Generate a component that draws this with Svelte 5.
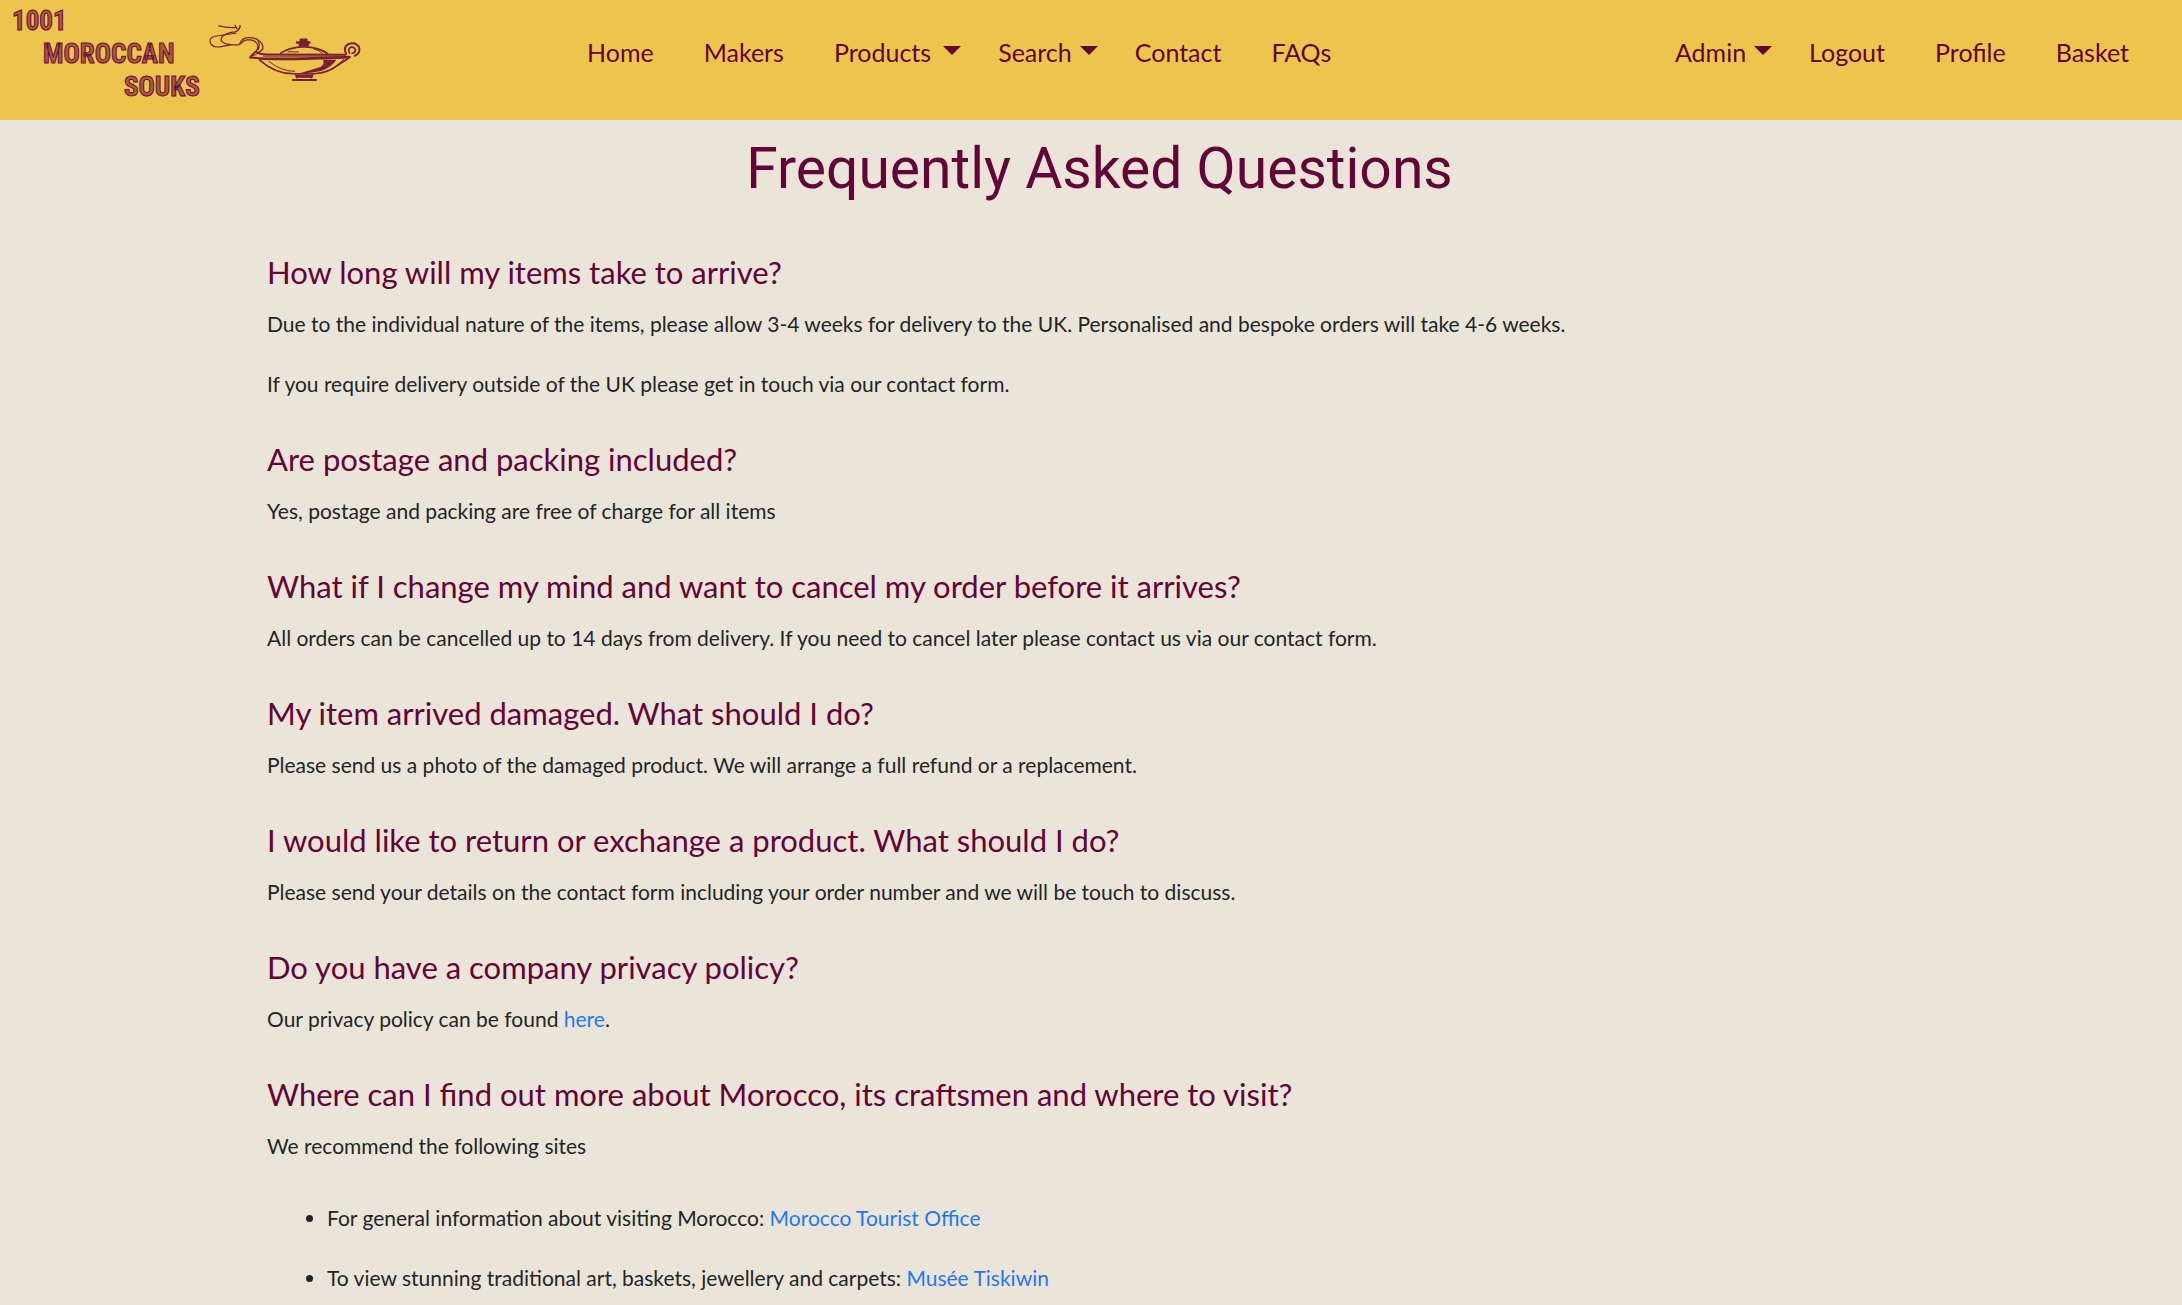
<script>
  const mainNav = [
    { label: 'Home' },
    { label: 'Makers' },
    { label: 'Products', menu: true, wide: true },
    { label: 'Search', menu: true },
    { label: 'Contact' },
    { label: 'FAQs' }
  ];
  const userNav = [
    { label: 'Admin', menu: true },
    { label: 'Logout' },
    { label: 'Profile' },
    { label: 'Basket' }
  ];
  const faqs = [
    {
      q: 'How long will my items take to arrive?',
      a: [
        'Due to the individual nature of the items, please allow 3-4 weeks for delivery to the UK. Personalised and bespoke orders will take 4-6 weeks.',
        'If you require delivery outside of the UK please get in touch via our contact form.'
      ]
    },
    {
      q: 'Are postage and packing included?',
      a: ['Yes, postage and packing are free of charge for all items']
    },
    {
      q: 'What if I change my mind and want to cancel my order before it arrives?',
      a: ['All orders can be cancelled up to 14 days from delivery. If you need to cancel later please contact us via our contact form.']
    },
    {
      q: 'My item arrived damaged. What should I do?',
      a: ['Please send us a photo of the damaged product. We will arrange a full refund or a replacement.']
    },
    {
      q: 'I would like to return or exchange a product. What should I do?',
      a: ['Please send your details on the contact form including your order number and we will be touch to discuss.']
    }
  ];
  const sites = [
    { text: 'For general information about visiting Morocco:', link: 'Morocco Tourist Office' },
    { text: 'To view stunning traditional art, baskets, jewellery and carpets:', link: 'Musée Tiskiwin' }
  ];
</script>

{#snippet items(list)}
  <ul class="nav">
    {#each list as item}
      <li>
        {#if item.menu}
          <button type="button" class="link toggle" class:wide={item.wide} aria-haspopup="true">
            {item.label}<span class="caret"></span>
          </button>
        {:else}
          <a class="link plain" href="#top">{item.label}</a>
        {/if}
      </li>
    {/each}
  </ul>
{/snippet}

<header class="bar" id="top">
  <a class="brand" href="#top">
    <span class="name">
      <span>1001</span>
      <span class="second">MOROCCAN</span>
      <span class="third">SOUKS</span>
    </span>
    <svg class="lamp" viewBox="20 30 470 190" aria-hidden="true">
      <g fill="none" stroke="currentColor" stroke-linecap="round" stroke-linejoin="round">
        <!-- smoke -->
        <path stroke-width="4" d="M54 48 Q75 54 103 53 M103 46 L108 56 M118 47 Q116 62 103 66 Q78 68 64 80 Q54 96 76 102 Q98 107 116 104 Q122 84 142 83 Q164 82 174 92 Q190 104 186 118 Q180 126 170 130" />
        <path stroke-width="3.5" d="M106 70 Q70 74 42 79 Q24 84 28 98 Q34 114 56 111 Q72 108 90 105 M112 60 L118 52 M120 102 Q130 88 144 90 Q160 88 168 100 Q176 110 166 124 M172 94 Q180 106 172 120" />
        <!-- spout and rim -->
        <path stroke-width="6" d="M163 127 L148 143 L184 146 M166 126 Q176 134 200 134 L436 135" />
        <path stroke-width="8" d="M184 147 Q300 149 448 142" />
        <path stroke-width="3" d="M188 139 H430 M158 138 L176 128" />
        <!-- lid -->
        <path stroke-width="5" d="M240 130 Q268 112 308 111 Q352 110 382 131" />
        <path stroke-width="3" d="M262 126 H294 M342 118 Q358 122 366 130" />
        <path stroke-width="8" d="M290 98 H327 M301 90 H318 M298 106 H322" />
        <!-- bowl -->
        <path stroke-width="5" d="M176 150 Q226 194 284 192 H340 Q386 190 416 164 L444 146" />
        <path stroke-width="3" d="M204 154 Q240 184 282 185 M396 178 L432 148" />
        <!-- base -->
        <path stroke-width="6" d="M288 200 H336 M277 211 H347" />
        <path stroke-width="3" d="M284 193 L290 206 M338 193 L332 206" />
        <!-- handle -->
        <path stroke-width="6" d="M438 132 Q428 112 444 103 Q466 94 477 112 Q482 130 464 138" />
        <path stroke-width="5" d="M448 130 Q442 116 452 112 Q464 110 466 122 Q464 130 456 130" />
      </g>
      <path fill="currentColor" d="M368 150 L408 150 Q396 172 362 184 Q330 192 300 190 Q338 180 360 172 Q374 164 368 150 Z M296 94 H326 V108 H296 Z M286 194 H336 V204 H286 Z" />
    </svg>
  </a>
  <nav class="menus" aria-label="Main">
    {@render items(mainNav)}
    {@render items(userNav)}
  </nav>
</header>

<main>
  <h1>Frequently Asked Questions</h1>
  {#each faqs as faq}
    <section>
      <h2>{faq.q}</h2>
      {#each faq.a as line}
        <p>{line}</p>
      {/each}
    </section>
  {/each}
  <section>
    <h2>Do you have a company privacy policy?</h2>
    <p>Our privacy policy can be found <a href="#privacy">here</a>.</p>
  </section>
  <section>
    <h2>Where can I find out more about Morocco, its craftsmen and where to visit?</h2>
    <p>We recommend the following sites</p>
    <ul class="sites">
      {#each sites as site}
        <li>{site.text} <a href="#site">{site.link}</a></li>
      {/each}
    </ul>
  </section>
</main>

<style>
  :global(body) {
    margin: 0;
    background: #eae5d8;
    color: #212529;
    font: 21px/36px Lato, sans-serif;
  }

  .bar {
    display: flex;
    align-items: flex-start;
    box-sizing: border-box;
    min-height: 120px;
    padding: 5px 40px 0 12px;
    background: #edc54c;
    color: #640338;
  }

  .brand {
    display: flex;
    flex: none;
    color: #7a1f38;
    text-decoration: none;
  }

  .name {
    display: flex;
    flex-direction: column;
    width: 195px;
    font: 700 27px/33px 'Roboto Condensed', 'Liberation Sans', sans-serif;
    color: #a85a40;
    -webkit-text-stroke: 1px #6a0a38;
  }

  .second {
    padding-left: 31px;
  }

  .third {
    padding-left: 112px;
  }

  .lamp {
    width: 157px;
    height: 63px;
    margin-top: 15px;
  }

  .menus {
    display: flex;
    flex: 1;
    justify-content: space-between;
    padding: 29px 0 0 223px;
  }

  .nav {
    display: flex;
    gap: 37px;
    margin: 0;
    padding: 0;
    list-style: none;
  }

  .link {
    display: flex;
    align-items: center;
    padding: 0;
    border: 0;
    background: none;
    color: inherit;
    font: 25px/36px Lato, sans-serif;
    text-decoration: none;
    cursor: pointer;
  }

  .plain {
    padding-right: 13px;
  }

  .toggle {
    gap: 8px;
  }

  .wide {
    gap: 12px;
  }

  .caret {
    border: 9px solid transparent;
    border-bottom-width: 0;
    border-top-color: currentColor;
    margin-bottom: 4px;
  }

  main {
    max-width: 1665px;
    margin: 0 auto;
    padding: 13px 0 0 17px;
  }

  h1 {
    margin: 0 0 46px;
    color: #640338;
    font: 400 57px/72px Roboto, sans-serif;
    text-align: center;
  }

  h2 {
    margin: 0 0 12px;
    color: #640338;
    font: 400 31px/43px Lato, sans-serif;
  }

  p {
    margin: 0 0 24px;
  }

  section {
    margin-bottom: 36px;
  }

  main a {
    color: #1f78f0;
    text-decoration: none;
  }

  .sites {
    margin: 36px 0 0;
    padding-left: 60px;
  }

  .sites li {
    margin-bottom: 24px;
  }
</style>
